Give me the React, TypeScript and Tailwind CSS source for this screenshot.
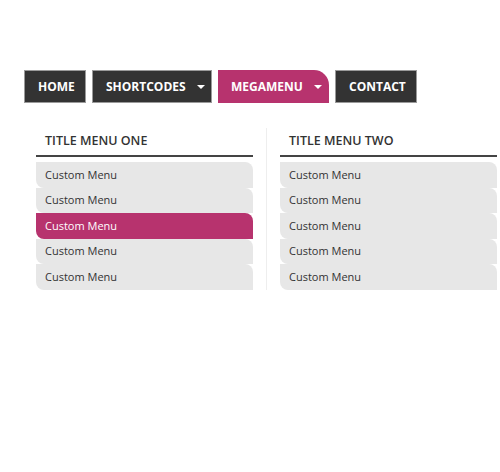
const NAV = [
  { label: "HOME", caret: false, active: false, w: "w-[62px]" },
  { label: "SHORTCODES", caret: true, active: false, w: "w-[120px]" },
  { label: "MEGAMENU", caret: true, active: true, w: "w-[111px]" },
  { label: "CONTACT", caret: false, active: false, w: "w-[82px]" },
];

const ITEMS = ["Custom Menu", "Custom Menu", "Custom Menu", "Custom Menu", "Custom Menu"];

function Caret() {
  return (
    <span className="ml-[11px] inline-block w-0 h-0 border-l-[4px] border-r-[4px] border-t-[4px] border-l-transparent border-r-transparent border-t-white" />
  );
}

function MenuColumn({ title, activeIndex }: { title: string; activeIndex: number }) {
  return (
    <div className="w-[217px] shrink-0">
      <div className="h-[29px] flex items-center pl-[9px] text-[12.5px] font-semibold text-[#333] border-b-2 border-[#444]">
        {title}
      </div>
      <ul className="list-none m-0 p-0 mt-[5px]">
        {ITEMS.map((item, i) => (
          <li
            key={i}
            className={`h-[25.5px] flex items-center pl-[9px] text-[11px] rounded-tr-[8px] rounded-bl-[8px] ${
              i === activeIndex ? "bg-[#b7336e] text-white" : "bg-[#e7e7e7] text-[#333]"
            }`}
          >
            {item}
          </li>
        ))}
      </ul>
    </div>
  );
}

export default function App() {
  return (
    <div className="w-[500px] h-[472px] bg-white pt-[70px] pl-[24px] overflow-hidden font-['Open_Sans',sans-serif]">
      <nav className="flex gap-[6px] h-[33px]">
        {NAV.map((n) => (
          <div
            key={n.label}
            className={`${n.w} h-full flex items-center pl-[13px] text-[12px] font-bold text-white ${
              n.active ? "bg-[#b7336e] rounded-tr-[15px]" : "bg-[#333333] border border-[#9a9a9a]"
            }`}
          >
            {n.label}
            {n.caret && <Caret />}
          </div>
        ))}
      </nav>
      <div className="flex mt-[25px] pl-[12px]">
        <MenuColumn title="TITLE MENU ONE" activeIndex={2} />
        <div className="w-px bg-[#eeeeee] mx-[13px] self-stretch" />
        <MenuColumn title="TITLE MENU TWO" activeIndex={-1} />
      </div>
    </div>
  );
}
